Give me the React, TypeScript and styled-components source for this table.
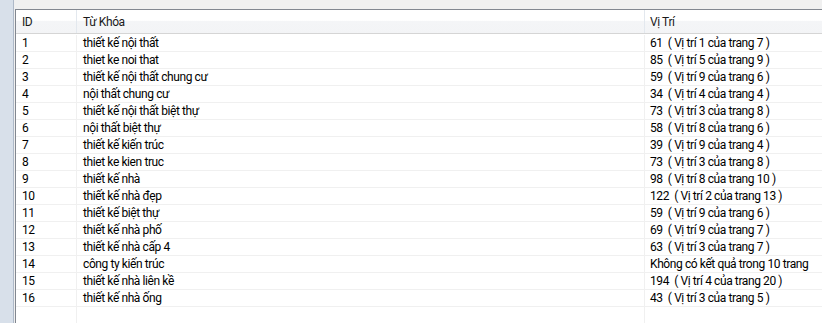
import React from 'react'
import styled, { createGlobalStyle } from 'styled-components'

interface IRank {
  id: number
  keyword: string
  position: string
}

const rankings: IRank[] = [
  { id: 1, keyword: 'thiết kế nội thất', position: '61  ( Vị trí 1 của trang 7 )' },
  { id: 2, keyword: 'thiet ke noi that', position: '85  ( Vị trí 5 của trang 9 )' },
  { id: 3, keyword: 'thiết kế nội thất chung cư', position: '59  ( Vị trí 9 của trang 6 )' },
  { id: 4, keyword: 'nội thất chung cư', position: '34  ( Vị trí 4 của trang 4 )' },
  { id: 5, keyword: 'thiết kế nội thất biệt thự', position: '73  ( Vị trí 3 của trang 8 )' },
  { id: 6, keyword: 'nội thất biệt thự', position: '58  ( Vị trí 8 của trang 6 )' },
  { id: 7, keyword: 'thiết kế kiến trúc', position: '39  ( Vị trí 9 của trang 4 )' },
  { id: 8, keyword: 'thiet ke kien truc', position: '73  ( Vị trí 3 của trang 8 )' },
  { id: 9, keyword: 'thiết kế nhà', position: '98  ( Vị trí 8 của trang 10 )' },
  { id: 10, keyword: 'thiết kế nhà đẹp', position: '122  ( Vị trí 2 của trang 13 )' },
  { id: 11, keyword: 'thiết kế biệt thự', position: '59  ( Vị trí 9 của trang 6 )' },
  { id: 12, keyword: 'thiết kế nhà phố', position: '69  ( Vị trí 9 của trang 7 )' },
  { id: 13, keyword: 'thiết kế nhà cấp 4', position: '63  ( Vị trí 3 của trang 7 )' },
  { id: 14, keyword: 'công ty kiến trúc', position: 'Không có kết quả trong 10 trang' },
  { id: 15, keyword: 'thiết kế nhà liên kề', position: '194  ( Vị trí 4 của trang 20 )' },
  { id: 16, keyword: 'thiết kế nhà ống', position: '43  ( Vị trí 3 của trang 5 )' },
]

const GlobalStyle = createGlobalStyle`
  html, body {
    margin: 0;
    padding: 0;
    height: 100%;
    overflow: hidden;
    background: #f0f0f0;
  }
  #root {
    height: 100%;
  }
`

const App: React.FC = () => (
  <>
    <GlobalStyle />
    <Page>
      <SideStrip />
      <ListView>
        <HeaderRow>
          <HeaderCell>ID</HeaderCell>
          <HeaderCell>Từ Khóa</HeaderCell>
          <HeaderCell $pad={5}>Vị Trí</HeaderCell>
        </HeaderRow>
        <Body>
          {rankings.map((r) => (
            <Row key={r.id}>
              <Cell>{r.id}</Cell>
              <Cell>{r.keyword}</Cell>
              <Cell $pad={5}>{r.position}</Cell>
            </Row>
          ))}
          <FillerRow>
            <Cell />
            <Cell />
            <Cell />
          </FillerRow>
        </Body>
      </ListView>
    </Page>
  </>
)

const columns = '61px 568px 1fr'

const Page = styled.div`
  display: flex;
  height: 100%;
  font-family: Roboto, 'Liberation Sans', sans-serif;
  font-size: 12px;
  letter-spacing: -0.4px;
  color: #000;
`

const SideStrip = styled.div`
  width: 13px;
  flex: none;
  background: #d8e0ea;
  border-right: 1px solid #aeb9c8;
  margin-right: 1px;
`

const ListView = styled.div`
  flex: 1;
  margin-top: 9px;
  margin-right: -10px;
  display: flex;
  flex-direction: column;
  background: #fff;
  border-top: 1px solid #828790;
  border-left: 1px solid #828790;
`

const HeaderRow = styled.div`
  display: grid;
  grid-template-columns: ${columns};
  height: 23px;
  background: linear-gradient(#ffffff, #ffffff 45%, #f4f5f7 50%, #f3f4f6);
  border-bottom: 1px solid #d5d5d5;
`

const HeaderCell = styled.div<{ $pad?: number }>`
  display: flex;
  align-items: center;
  padding-left: ${(p) => p.$pad ?? 6}px;
  border-right: 1px solid #e3e8ee;
  color: #1a1a1a;
  white-space: pre;
`

const Body = styled.div`
  flex: 1;
  display: flex;
  flex-direction: column;
  padding-top: 1px;
`

const Row = styled.div`
  display: grid;
  grid-template-columns: ${columns};
  height: 17px;
  border-bottom: 1px solid #f0f0f0;
  box-sizing: border-box;
`

const FillerRow = styled(Row)`
  flex: 1;
  border-bottom: none;
`

const Cell = styled.div<{ $pad?: number }>`
  display: flex;
  align-items: center;
  padding-left: ${(p) => p.$pad ?? 6}px;
  border-right: 1px solid #f0f0f0;
  white-space: pre;
  overflow: hidden;
  line-height: 16px;
`

export default App
